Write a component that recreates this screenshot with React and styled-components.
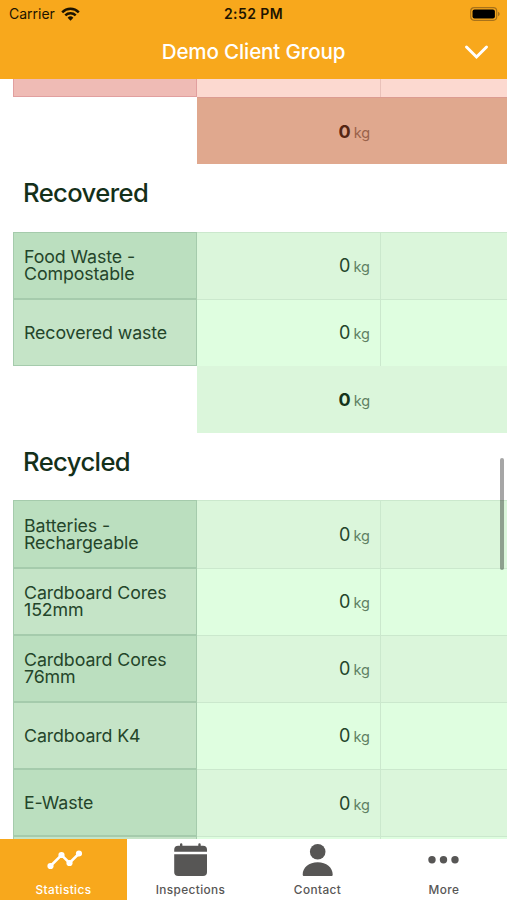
import React from 'react'
import styled, { createGlobalStyle } from 'styled-components'

const GlobalStyle = createGlobalStyle`
  * {
    box-sizing: border-box;
  }

  body {
    margin: 0;
    background: #fff;
    font-family: Inter, Roboto, 'Liberation Sans', sans-serif;
  }
`

const palettes = {
  green: {
    label: ['#bbdfbf', '#c5e4c7'],
    labelBorder: '#a5cbac',
    cell: ['#dbf6db', '#dffee0'],
    cellBorder: '#cbe8cd',
    total: '#dbf6db',
    value: '#24452a',
    totalValue: '#15341a',
    unit: '#5f8163'
  },
  red: {
    label: ['#efbbb5', '#efbbb5'],
    labelBorder: '#e19f9f',
    cell: ['#fcd9d0', '#fcd9d0'],
    cellBorder: '#e9c1b9',
    total: '#e0a88e',
    value: '#542512',
    totalValue: '#542512',
    unit: '#99624b'
  }
}

const Screen = styled.div`
  display: flex;
  flex-direction: column;
  width: 507px;
  height: 900px;
  overflow: hidden;
`

const Header = styled.header`
  height: 79px;
  flex-shrink: 0;
  background: #f8a81c;
`

const StatusBar = styled.div`
  display: grid;
  grid-template-columns: 1fr auto 1fr;
  align-items: center;
  height: 27px;
  padding: 0 7px 0 9px;
  color: #1d1400;
  font-size: 14px;
`

const Carrier = styled.div`
  display: flex;
  align-items: center;
  gap: 6px;
`

const Time = styled.div`
  margin-left: -2px;
  font-weight: 600;
  letter-spacing: 0.4px;
`

const Battery = styled.svg`
  justify-self: end;
`

const TitleBar = styled.div`
  display: grid;
  grid-template-columns: 1fr auto 1fr;
  align-items: center;
  height: 50px;
  padding: 0 18px;
  color: #fff;
`

const Title = styled.h1`
  grid-column: 2;
  margin: 0;
  padding-bottom: 2px;
  font-size: 20.6px;
  font-weight: 500;
  letter-spacing: -0.15px;
`

const Chevron = styled.svg`
  justify-self: end;
`

const Content = styled.main`
  position: relative;
  height: 760px;
  flex-shrink: 0;
  overflow: hidden;
`

const Table = styled.div`
  margin-top: -49px;
  padding-left: 13px;
`

const Row = styled.div`
  display: grid;
  grid-template-columns: 184px 184px 1fr;
  height: 67.2px;
`

const Label = styled.div`
  display: flex;
  align-items: center;
  padding: 0 10px;
  border: 1px solid ${({ $palette }) => $palette.labelBorder};
  background: ${({ $palette, $odd }) => $palette.label[$odd ? 1 : 0]};
  color: ${({ $palette }) => $palette.value};
  font-size: 17.8px;
  line-height: 17px;
  letter-spacing: -0.1px;
`

const Cell = styled.div`
  display: flex;
  align-items: center;
  justify-content: flex-end;
  padding-right: 10px;
  border-top: 1px solid ${({ $palette }) => $palette.cellBorder};
  border-right: 1px solid ${({ $palette }) => $palette.cellBorder};
  background: ${({ $palette, $odd }) => $palette.cell[$odd ? 1 : 0]};

  &:last-child {
    border-right: 0;
  }
`

const TotalCell = styled.div`
  display: flex;
  align-items: center;
  grid-column: 2 / 4;
  padding-left: 141.5px;
  border-top: ${({ $line }) => ($line ? `1px solid ${$line}` : '0')};
  background: ${({ $palette }) => $palette.total};
`

const Amount = styled.div`
  display: flex;
  align-items: baseline;
  gap: 3px;
  color: ${({ $palette, $bold }) => ($bold ? $palette.totalValue : $palette.value)};
  font-size: 18px;
  font-weight: ${({ $bold }) => ($bold ? 700 : 400)};
`

const Unit = styled.span`
  color: ${({ $palette }) => $palette.unit};
  font-size: 14.5px;
  font-weight: 400;
`

const SectionTitle = styled.h2`
  display: flex;
  align-items: center;
  height: 67.2px;
  margin: 0;
  padding: 0 0 11px 10px;
  color: #14301a;
  font-size: 25.6px;
  font-weight: 500;
  letter-spacing: -0.6px;
`

const ScrollThumb = styled.div`
  position: absolute;
  top: 379px;
  right: 3px;
  width: 4px;
  height: 112px;
  border-radius: 2px;
  background: rgba(0, 0, 0, 0.35);
`

const TabBar = styled.nav`
  display: grid;
  grid-template-columns: 127px 127px 127px 1fr;
  height: 61px;
  flex-shrink: 0;
  background: #fff;
`

const Tab = styled.button`
  display: flex;
  flex-direction: column;
  align-items: center;
  gap: 5px;
  padding: 3px 0 0;
  border: 0;
  background: ${({ $active }) => ($active ? '#f8a81c' : '#fff')};
  color: ${({ $active }) => ($active ? '#fff' : '#575655')};
  font-family: inherit;
  font-size: 11.8px;
  font-weight: 500;
  letter-spacing: 0.4px;
`

const TabIcon = styled.svg`
  display: block;
  flex-shrink: 0;
`

const sections = [
  {
    title: 'Recovered',
    rows: ['Food Waste -\nCompostable', 'Recovered waste'],
    hasTotal: true
  },
  {
    title: 'Recycled',
    rows: [
      'Batteries -\nRechargeable',
      'Cardboard Cores\n152mm',
      'Cardboard Cores\n76mm',
      'Cardboard K4',
      'E-Waste',
      ''
    ]
  }
]

const Value = ({ palette, bold }) => (
  <Amount $palette={palette} $bold={bold}>
    0<Unit $palette={palette}>kg</Unit>
  </Amount>
)

const LabelText = styled.span`
  white-space: pre-line;
`

const WasteRow = ({ palette, label, odd }) => (
  <Row>
    <Label $palette={palette} $odd={odd}>
      <LabelText>{label}</LabelText>
    </Label>
    <Cell $palette={palette} $odd={odd}>
      {label && <Value palette={palette} />}
    </Cell>
    <Cell $palette={palette} $odd={odd} />
  </Row>
)

const TotalRow = ({ palette, line }) => (
  <Row>
    <TotalCell $palette={palette} $line={line}>
      <Value palette={palette} bold />
    </TotalCell>
  </Row>
)

const StatisticsIcon = () => (
  <TabIcon width="36" height="36" viewBox="0 0 36 36" fill="currentColor">
    <path d="M4.5 24 15.5 13l8 8 9.5-9.5" fill="none" stroke="currentColor" strokeWidth="2.5" />
    <circle cx="4.5" cy="24" r="3.1" />
    <circle cx="15.5" cy="13" r="3.1" />
    <circle cx="23.5" cy="21" r="3.1" />
    <circle cx="33" cy="11.5" r="3.1" />
  </TabIcon>
)

const CalendarIcon = () => (
  <TabIcon width="36" height="36" viewBox="0 0 36 36" fill="currentColor">
    <path d="M1.2 9.8v-2a4 4 0 0 1 4-4H7V2.500a1.200 1.200 0 0 1 2.400 0v1.300h15.900V2.500a1.200 1.200 0 0 1 2.400 0v1.300H30a4 4 0 0 1 4 4v2z" />
    <path d="M1.2 12.2H34V30a4 4 0 0 1-4 4H5.200a4 4 0 0 1-4-4z" />
  </TabIcon>
)

const PersonIcon = () => (
  <TabIcon width="36" height="36" viewBox="0 0 36 36" fill="currentColor">
    <circle cx="17.7" cy="9.7" r="7.8" />
    <path d="M2.7 32.500C2.700 25.500 9 20.200 17.700 20.200s15 5.300 15 12.300c0 1-.5 1.500-1.500 1.500h-27c-1 0-1.500-.5-1.500-1.500z" />
  </TabIcon>
)

const MoreIcon = () => (
  <TabIcon width="36" height="36" viewBox="0 0 36 36" fill="currentColor">
    <circle cx="6" cy="17.8" r="3.7" />
    <circle cx="17.5" cy="17.8" r="3.7" />
    <circle cx="29" cy="17.8" r="3.7" />
  </TabIcon>
)

const tabs = [
  { name: 'Statistics', icon: StatisticsIcon },
  { name: 'Inspections', icon: CalendarIcon },
  { name: 'Contact', icon: PersonIcon },
  { name: 'More', icon: MoreIcon }
]

const App = () => {
  const { green, red } = palettes

  return (
    <Screen>
      <GlobalStyle />
      <Header>
        <StatusBar>
          <Carrier>
            Carrier
            <svg width="19" height="14" viewBox="0 0 19 14">
              <g fill="none" stroke="#1d1400" strokeWidth="2.5">
                <path d="M1.2 5.300a11.700 11.700 0 0 1 16.600 0" />
                <path d="M4.3 8.400a7.400 7.400 0 0 1 10.400 0" />
              </g>
              <path d="M6.6 10.700a4.200 4.200 0 0 1 5.800 0L9.500 13.700z" fill="#1d1400" />
            </svg>
          </Carrier>
          <Time>2:52 PM</Time>
          <Battery width="30" height="14" viewBox="0 0 30 14">
            <rect x="0.7" y="0.7" width="26" height="12.6" rx="3.5" fill="none" stroke="#a8721a" strokeWidth="1.2" />
            <rect x="2.5" y="2.5" width="22.4" height="9" rx="2" fill="#000" />
            <path d="M28 4.800c2.200.8 2.200 3.600 0 4.400z" fill="#a8721a" />
          </Battery>
        </StatusBar>
        <TitleBar>
          <Title>Demo Client Group</Title>
          <Chevron width="25" height="16" viewBox="0 0 25 16">
            <path d="M2.500 3 12.500 13l10-10" fill="none" stroke="#fff" strokeWidth="3" strokeLinecap="round" />
          </Chevron>
        </TitleBar>
      </Header>

      <Content>
        <Table>
          <WasteRow palette={red} label="" />
          <TotalRow palette={red} line="#dc9c91" />
          {sections.map((section) => (
            <React.Fragment key={section.title}>
              <SectionTitle>{section.title}</SectionTitle>
              {section.rows.map((label, index) => (
                <WasteRow key={index} palette={green} label={label} odd={index % 2 === 1} />
              ))}
              {section.hasTotal && <TotalRow palette={green} />}
            </React.Fragment>
          ))}
        </Table>
        <ScrollThumb />
      </Content>

      <TabBar>
        {tabs.map(({ name, icon: Icon }, index) => (
          <Tab key={name} $active={index === 0}>
            <Icon />
            {name}
          </Tab>
        ))}
      </TabBar>
    </Screen>
  )
}

export default App
